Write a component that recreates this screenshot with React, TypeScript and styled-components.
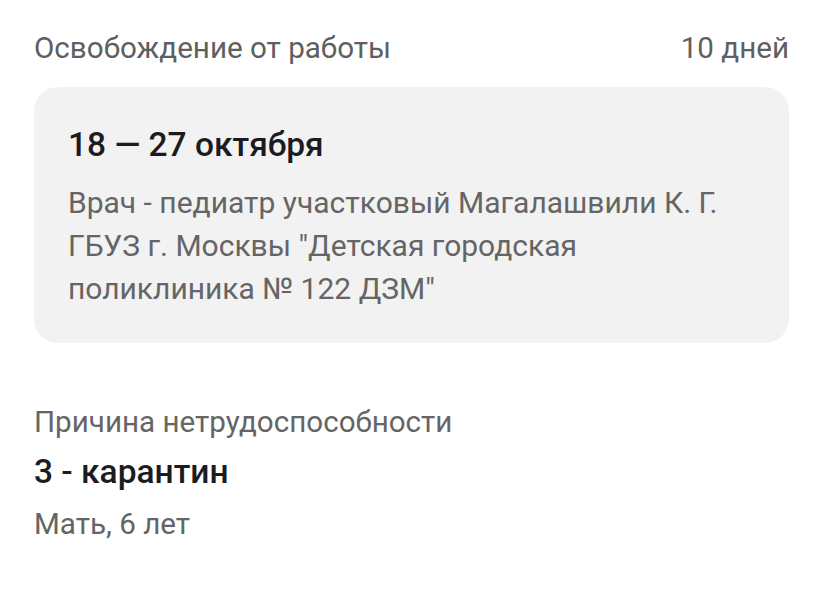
import React from 'react';
import styled, { createGlobalStyle } from 'styled-components';

const GlobalStyle = createGlobalStyle`
  html, body {
    margin: 0;
    padding: 0;
    background: #ffffff;
  }
  body {
    font-family: Roboto, 'Noto Sans', sans-serif;
    -webkit-font-smoothing: antialiased;
  }
`;

const Page = styled.div`
  padding: 29px 34px 0 34px;
  display: flex;
  flex-direction: column;
`;

const Header = styled.div`
  display: flex;
  justify-content: space-between;
  align-items: baseline;
  font-size: 29.6px;
  line-height: 38px;
  color: #5f5f5f;
`;

const Card = styled.div`
  margin-top: 20px;
  background: #f2f2f2;
  border-radius: 24px;
  padding: 38px 34px 33px 34px;
`;

const Title = styled.div<{ $top?: number }>`
  font-size: 33.5px;
  line-height: 40px;
  font-weight: 500;
  color: #1c1c1e;
  margin-top: ${(p) => p.$top ?? 0}px;
`;

const Muted = styled.div<{ $top?: number; $size?: number }>`
  font-size: ${(p) => p.$size ?? 30}px;
  line-height: 43px;
  color: #656565;
  margin-top: ${(p) => p.$top ?? 0}px;
`;

const Section = styled.div`
  margin-top: 58px;
  display: flex;
  flex-direction: column;
`;

export default function App() {
  return (
    <>
      <GlobalStyle />
      <Page>
        <Header>
          <span>Освобождение от работы</span>
          <span>10 дней</span>
        </Header>
        <Card>
          <Title>18 — 27 октября</Title>
          <Muted $top={16}>
            Врач - педиатр участковый Магалашвили К. Г.
            <br />
            ГБУЗ г. Москвы "Детская городская
            <br />
            поликлиника № 122 ДЗМ"
          </Muted>
        </Card>
        <Section>
          <Muted $size={29.6}>Причина нетрудоспособности</Muted>
          <Title $top={8}>3 - карантин</Title>
          <Muted $top={11} $size={29.6}>Мать, 6 лет</Muted>
        </Section>
      </Page>
    </>
  );
}
